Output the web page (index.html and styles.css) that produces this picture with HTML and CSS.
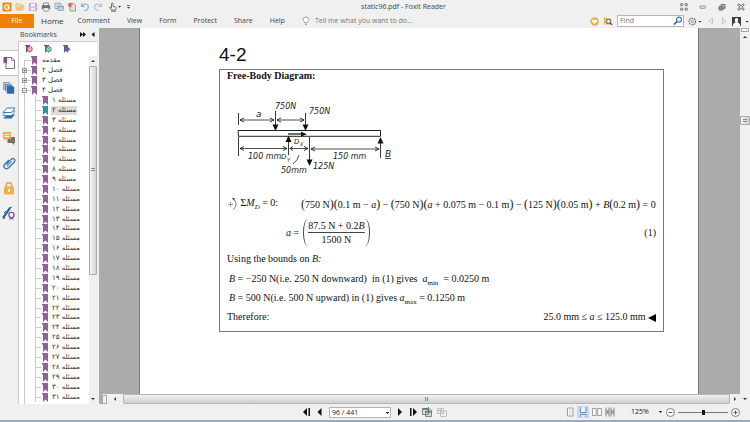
FILE: index.html
```html
<!DOCTYPE html>
<html lang="en">
<head>
<meta charset="utf-8">
<title>static96.pdf - Foxit Reader</title>
<link rel="stylesheet" href="styles.css">
</head>
<body>
<svg class="defs" aria-hidden="true">
  <symbol id="flag" viewBox="0 0 6 9"><path d="M0 0H6V9L3.4 6.6L1 9V1.6H0z"/></symbol>
</svg>

<header class="titlebar">
  <div class="quick">
    <button aria-label="Foxit"><svg width="10" height="10"><rect x=".5" y=".5" width="9" height="9" rx="1" fill="#f08a12"/><path d="M7.4 3.2C4 2 2.5 4 2.7 5.5S5 8 7 6.8V5H5.3" fill="none" stroke="#fff" stroke-width="1.3"/></svg></button>
    <button aria-label="Open"><svg width="10" height="10"><path d="M1 8.5V1.8h3l1 1h3v1.4" fill="#f7dda8" stroke="#dfab55" stroke-width=".7"/><path d="M1 8.5L3 4.3h6.6L8 8.5z" fill="#f3c374"/></svg></button>
    <button aria-label="Save"><svg width="10" height="10"><path d="M1.5 1.5h7v7h-7z" fill="#d9c5df" stroke="#b795c4" stroke-width=".9"/><path d="M3 1.5h4v2.8H3zM3 6h4v2.5H3z" fill="#f7f0f8"/></svg></button>
    <button aria-label="Print"><svg width="10" height="10"><path d="M2.7 1h4.6v3H2.7zM2.7 6h4.6v3H2.7z" fill="#fff" stroke="#555" stroke-width=".7"/><path d="M.8 3.3h8.4v3.9H.8z" fill="#68717b"/><path d="M2.5 6h5v2.6h-5z" fill="#dde9f3"/></svg></button>
    <button aria-label="Email"><svg width="10" height="10"><path d="M1 1.2h6v5.3H1z" fill="#eee" stroke="#888" stroke-width=".7"/><path d="M2 3h4M2 4.7h4" stroke="#999" stroke-width=".6"/><path d="M4 4.3h5.3v4H4z" fill="#dceaf6" stroke="#5b86ad" stroke-width=".7"/><path d="M4 4.5l2.7 2L9.3 4.5" fill="none" stroke="#5b86ad" stroke-width=".6"/></svg></button>
    <button aria-label="New"><svg width="10" height="10"><path d="M3 1.5h3.5l2 2V9H3z" fill="#e5e2dd" stroke="#8b8781" stroke-width=".8"/><path d="M3 .7v4.6M.7 3h4.6M1.4 1.4l3.2 3.2M4.600 1.4L1.400 4.600" stroke="#d94c38" stroke-width=".9"/></svg></button>
    <button aria-label="Undo"><svg width="10" height="10"><path d="M1.500 1.300V4.400H4.700M1.800 4.200C4 .5 8.500 1.500 8.300 5.200 8.200 7.500 6 8.700 4.300 8.500" fill="none" stroke="#8aaed2" stroke-width="1.100"/></svg></button>
    <button aria-label="Redo"><svg width="10" height="10"><path d="M8.500 1.300V4.400H5.300M8.200 4.200C6 .5 1.500 1.500 1.700 5.200 1.800 7.500 4 8.700 5.700 8.500" fill="none" stroke="#a9c2da" stroke-width="1.100"/></svg></button>
    <button aria-label="Hand tool" class="wide"><svg width="13" height="10"><path d="M3.500 6V2q0-1 .8-1t.7 1v2.500l2.700.6q.7.300.4 1.200L7.500 8H3.700L1.500 5.500q.7-.8 2 .5M3 9.200h5" fill="#fff" stroke="#566170" stroke-width=".9"/><path d="M10 4h3l-1.500 1.700z" fill="#333"/></svg></button>
    <button aria-label="Customize"><svg width="10" height="10"><path d="M2 3.500h3" stroke="#444" stroke-width=".8"/><path d="M2 5h3L3.500 6.700z" fill="#333"/></svg></button>
  </div>
  <h1>static96.pdf - Foxit Reader</h1>
  <div class="winbtns">
    <button aria-label="Layout"><svg width="8" height="8" fill="none" stroke="#777b86"><path d="M.7.7h2v2h-2zM5.200.7h2v2h-2zM.7 5.200h2v2h-2zM5.200 5.200h2v2h-2z"/></svg></button>
    <button aria-label="Minimize"><svg width="8" height="8"><rect x="1" y="3" width="5.500" height="2.200" rx=".8" fill="#fff" stroke="#777b86" stroke-width=".9"/></svg></button>
    <button aria-label="Restore"><svg width="8" height="8"><path d="M3 1.500h4v3.800H3z" fill="#bbb" stroke="#70747f"/><path d="M1 3.500h4v3.500H1z" fill="#888c96" stroke="#70747f"/></svg></button>
    <button aria-label="Close"><svg width="8" height="8"><path d="M1 1l6 6M7 1L1 7" stroke="#70747f" stroke-width="2.400"/><path d="M1.500 1.500l5 5M6.500 1.500l-5 5" stroke="#fff" stroke-width=".8"/></svg></button>
  </div>
</header>

<nav class="ribbon">
  <button class="file">File</button>
  <button class="tab on">Home</button>
  <button class="tab">Comment</button>
  <button class="tab">View</button>
  <button class="tab">Form</button>
  <button class="tab">Protect</button>
  <button class="tab">Share</button>
  <button class="tab">Help</button>
  <label class="tell"><svg width="8" height="10"><path d="M2.700 7V6Q1 4.800 1 3.500 1.200 1 4 1t3 2.500Q7 4.800 5.300 6v1zM3 8.700h2" fill="#fff" stroke="#8a8a8a" stroke-width=".8"/></svg><input aria-label="Tell me" placeholder="Tell me what you want to do..."></label>
  <div class="search">
    <button aria-label="Favorite"><svg width="9" height="9"><circle cx="4.500" cy="4.500" r="4.200" fill="#ecae4b"/><path d="M4.500 7L2 4.500Q1.700 2.500 3.300 2.500 4.200 2.600 4.500 3.400 4.800 2.600 5.700 2.500 7.300 2.500 7 4.500z" fill="#fff"/></svg></button>
    <button aria-label="Search folder"><svg width="10" height="10"><path d="M.8 1.500h3l.8 1h3.700v6H.8z" fill="#eeb65d"/><circle cx="5.500" cy="5.300" r="2" fill="#fff" stroke="#444" stroke-width=".9"/><path d="M7 6.800l2 2" stroke="#444" stroke-width="1.200"/></svg></button>
    <label class="find"><input type="text" aria-label="Find" placeholder="Find"><svg width="10" height="10"><circle cx="6" cy="3.600" r="2.500" fill="#f4f9ff" stroke="#3a78b8" stroke-width="1.200"/><path d="M4 5.500L1 8.500" stroke="#2f6198" stroke-width="1.700"/></svg></label>
    <button aria-label="Settings"><svg width="14" height="9"><circle cx="4.300" cy="4.500" r="3.300" fill="#eee" stroke="#666b75" stroke-width="1.100" stroke-dasharray="1.700 .7"/><circle cx="4.300" cy="4.500" r="1.200" fill="none" stroke="#777" stroke-width=".7"/><path d="M10.500 4h3L12 5.600z" fill="#222"/></svg></button>
    <button aria-label="Previous" class="step"><svg width="6" height="8"><path d="M4.500 1v6L1 4z" fill="none" stroke="#bbb" stroke-width=".8"/></svg></button>
    <button aria-label="Next" class="step"><svg width="6" height="8"><path d="M1.500 1v6L5 4z" fill="none" stroke="#bbb" stroke-width=".8"/></svg></button>
    <button aria-label="Account"><svg width="17" height="9"><path d="M0 0h9v9H0z" fill="#3c3c40"/><path d="M4.500 1C6.600 1 6.500 4 5.500 5.300L8 7v2H1V7l2.500-1.700C2.500 4 2.400 1 4.500 1" fill="#fff"/><path d="M13.500 4h3L15 5.600z" fill="#222"/></svg></button>
  </div>
</nav>

<main class="work">
  <aside class="rail">
    <button class="on" aria-label="Bookmarks"><svg width="14" height="14"><path d="M4 1.500h6l2.500 2.500v8.500H4z" fill="#fff" stroke="#777" stroke-width="1"/><path d="M9.500 1.500v3h3" fill="none" stroke="#777" stroke-width=".8"/><path d="M1.500 1H5v7L3.200 6.300 1.500 8z" fill="#7d4b96"/></svg></button>
    <button aria-label="Pages"><svg width="14" height="14"><path d="M1 1h7v8H1z" fill="#83a5c9"/><path d="M2.500 2.500h7.500v8H2.500z" fill="#4e83bb" stroke="#fff" stroke-width=".5"/><path d="M4.500 4H10l2.500 2.500V13h-8z" fill="#2b6cad" stroke="#fff" stroke-width=".5"/></svg></button>
    <button aria-label="Layers"><svg width="14" height="14"><path d="M5 8.500h8L9.500 12.500H1z" fill="#2d6dad"/><path d="M5 5h8L9.500 9.500H1z" fill="#fff" stroke="#3c79b5" stroke-width=".8"/><path d="M5 2h8L9.500 6.500H1z" fill="#fff" stroke="#3c79b5"/></svg></button>
    <button aria-label="Comments"><svg width="14" height="14"><path d="M5.500 6H13v6h-1v2l-2-2H5.500z" fill="#77736c"/><path d="M1 1h8v7H5L3 10V8H1z" fill="#edb04d"/><path d="M2.500 3.500h5M2.500 5.500h5" stroke="#fff" stroke-width=".8"/></svg></button>
    <button aria-label="Attachments"><svg width="14" height="14"><path d="M4.500 8.500L9 3.500Q10.500 1.700 12 3t.3 3L6.500 12Q4.300 13.500 2.700 12T2.500 8.500L7 4" fill="none" stroke="#3f7db9" stroke-width="1.400"/><path d="M5 10.500l4.500-5" stroke="#3f7db9" stroke-width="1.100"/></svg></button>
    <button aria-label="Security"><svg width="14" height="14"><path d="M4.300 6V4Q4.300 1.700 7 1.700T9.700 4v2" fill="none" stroke="#e2a440" stroke-width="1.400"/><rect x="2" y="5.500" width="10" height="8" rx=".8" fill="#edb04d"/><path d="M7 8v3" stroke="#fff" stroke-width="1.500"/></svg></button>
    <button aria-label="Signatures"><svg width="14" height="14"><path d="M1 12L8 2" stroke="#31669d" stroke-width="2.200"/><path d="M7 2l3-1M2 7l2-2M1 12.500l2-.3" stroke="#31669d"/><circle cx="9.500" cy="9" r="2.600" fill="#fff" stroke="#7d55a0" stroke-width="1.300"/><path d="M8 11l-.7 3 2.200-1.200 2 1.200-.7-3" fill="#7d55a0"/></svg></button>
  </aside>

  <section class="bookmarks">
    <div class="panel-head"><h2>Bookmarks</h2>
      <button aria-label="More"><svg width="6" height="5"><path d="M0 0l3 2.500L0 5zM3 0l3 2.500L3 5z" fill="#111"/></svg></button>
      <button aria-label="Collapse"><svg width="6" height="5"><path d="M4.500 0v5L1.500 2.500z" fill="#111"/></svg></button>
    </div>
    <div class="panel-tools">
      <button aria-label="Delete bookmark"><svg width="9" height="10"><path d="M1 1h5v8L3.800 6.800 2 9V2H1z" fill="#7d4b96"/><circle cx="5.800" cy="5" r="2.300" fill="#fff" stroke="#d6544d" stroke-width="1.100"/><path d="M4.500 5h2.500" stroke="#d6544d"/></svg></button>
      <button aria-label="Add bookmark"><svg width="9" height="10"><path d="M1 1h5v8L3.800 6.800 2 9V2H1z" fill="#7d4b96"/><circle cx="5.800" cy="5" r="2.300" fill="#fff" stroke="#36a079" stroke-width="1.100"/><path d="M4.500 5h2.500M5.800 3.800v2.500" stroke="#36a079" stroke-width=".8"/></svg></button>
      <button aria-label="Go to bookmark"><svg width="9" height="10"><path d="M1 1h5v8L3.800 6.800 2 9V2H1z" fill="#7d4b96"/><path d="M3.500 4.400H6V3l2.500 2.200L6 7.500V6H3.500z" fill="#4779ae"/></svg></button>
    </div>
    <div class="tree-wrap">
      <ul class="tree">
        <li class="top first"><i></i><svg><use href="#flag"/></svg><a href="#p">مقدمه</a></li>
        <li class="top"><i><button aria-label="Expand">+</button></i><svg><use href="#flag"/></svg><a href="#p">فصل ۲</a></li>
        <li class="top"><i><button aria-label="Expand">+</button></i><svg><use href="#flag"/></svg><a href="#p">فصل ۳</a></li>
        <li class="top"><i><button aria-label="Collapse">−</button></i><svg><use href="#flag"/></svg><a href="#p">فصل ۴</a></li>
        <li><i></i><svg><use href="#flag"/></svg><a href="#p">مسئله ۱</a></li>
        <li class="current"><i></i><svg><use href="#flag"/></svg><a href="#p">مسئله ۲</a></li>
        <li><i></i><svg><use href="#flag"/></svg><a href="#p">مسئله ۳</a></li>
        <li><i></i><svg><use href="#flag"/></svg><a href="#p">مسئله ۴</a></li>
        <li><i></i><svg><use href="#flag"/></svg><a href="#p">مسئله ۵</a></li>
        <li><i></i><svg><use href="#flag"/></svg><a href="#p">مسئله ۶</a></li>
        <li><i></i><svg><use href="#flag"/></svg><a href="#p">مسئله ۷</a></li>
        <li><i></i><svg><use href="#flag"/></svg><a href="#p">مسئله ۸</a></li>
        <li><i></i><svg><use href="#flag"/></svg><a href="#p">مسئله ۹</a></li>
        <li><i></i><svg><use href="#flag"/></svg><a href="#p">مسئله ۱۰</a></li>
        <li><i></i><svg><use href="#flag"/></svg><a href="#p">مسئله ۱۱</a></li>
        <li><i></i><svg><use href="#flag"/></svg><a href="#p">مسئله ۱۲</a></li>
        <li><i></i><svg><use href="#flag"/></svg><a href="#p">مسئله ۱۳</a></li>
        <li><i></i><svg><use href="#flag"/></svg><a href="#p">مسئله ۱۴</a></li>
        <li><i></i><svg><use href="#flag"/></svg><a href="#p">مسئله ۱۵</a></li>
        <li><i></i><svg><use href="#flag"/></svg><a href="#p">مسئله ۱۶</a></li>
        <li><i></i><svg><use href="#flag"/></svg><a href="#p">مسئله ۱۷</a></li>
        <li><i></i><svg><use href="#flag"/></svg><a href="#p">مسئله ۱۸</a></li>
        <li><i></i><svg><use href="#flag"/></svg><a href="#p">مسئله ۱۹</a></li>
        <li><i></i><svg><use href="#flag"/></svg><a href="#p">مسئله ۲۰</a></li>
        <li><i></i><svg><use href="#flag"/></svg><a href="#p">مسئله ۲۱</a></li>
        <li><i></i><svg><use href="#flag"/></svg><a href="#p">مسئله ۲۲</a></li>
        <li><i></i><svg><use href="#flag"/></svg><a href="#p">مسئله ۲۳</a></li>
        <li><i></i><svg><use href="#flag"/></svg><a href="#p">مسئله ۲۴</a></li>
        <li><i></i><svg><use href="#flag"/></svg><a href="#p">مسئله ۲۵</a></li>
        <li><i></i><svg><use href="#flag"/></svg><a href="#p">مسئله ۲۶</a></li>
        <li><i></i><svg><use href="#flag"/></svg><a href="#p">مسئله ۲۷</a></li>
        <li><i></i><svg><use href="#flag"/></svg><a href="#p">مسئله ۲۸</a></li>
        <li><i></i><svg><use href="#flag"/></svg><a href="#p">مسئله ۲۹</a></li>
        <li><i></i><svg><use href="#flag"/></svg><a href="#p">مسئله ۳۰</a></li>
        <li><i></i><svg><use href="#flag"/></svg><a href="#p">مسئله ۳۱</a></li>
      </ul>
      <div class="vbar tree-bar"><span class="up"></span><span class="thumb"></span><span class="track"></span><span class="down"></span></div>
    </div>
  </section>

  <div class="splitter"></div>

  <section class="viewer">
    <div class="canvas">
      <article class="page" id="p">
        <h2>4-2</h2>
        <div class="solution">
          <h3>Free-Body Diagram:</h3>
          <svg class="diagram" viewBox="228 82 190 110" width="190" height="110" role="img" aria-label="Free-body diagram of a beam">
            <g fill="none" stroke="#222" stroke-width="1">
              <path d="M238 130.500H380.500V136.300H238.500z"/>
              <path d="M238.500 113V125M238.500 137V156M275.500 111V126M305.500 113V126M288.500 142V155M309.500 137V161M380.500 141V158" stroke-width=".9"/>
              <path d="M240 120H274M277 120H304M240 148.500H287M289.500 148.500H308M311 149H379" stroke-width=".8"/>
              <path d="M244 118l-4 2 4 2M270 118l4 2-4 2M281 118l-4 2 4 2M300 118l4 2-4 2M244 146.500l-4 2 4 2M283 146.500l4 2-4 2M293 146.500l-3 2 3 2M304 146.500l4 2-4 2M315 147l-4 2 4 2M375 147l4 2-4 2" stroke-width=".9"/>
              <path d="M288 134H303" stroke-width="1.300"/>
              <path d="M299 155Q298 160 293 164M385 158.500H391" stroke-width=".8"/>
            </g>
            <path d="M272.500 124.500h6l-3 6.500zM302.500 124.500h6l-3 6.500zM285.500 142l3-6.500 3 6.500zM306.500 159.500h6l-3 6.500zM377.500 143.500l3-6.500 3 6.500zM301 131.800l6 2.400-6 2.200z" fill="#111"/>
            <g class="hand">
              <text x="256" y="117" class="big">a</text>
              <text x="275" y="109">750N</text>
              <text x="309" y="114">750N</text>
              <text x="248" y="159">100 mm</text>
              <text x="281" y="159" class="small">D</text><text x="287" y="162" class="tiny">Y</text>
              <text x="294" y="144" class="small">D</text><text x="300" y="146" class="tiny">X</text>
              <text x="281" y="173">50mm</text>
              <text x="313" y="169">125N</text>
              <text x="333" y="159">150 mm</text>
              <text x="385" y="157" class="big">B</text>
            </g>
          </svg>
          <div class="moment">
            <span class="lead"><svg width="11" height="14"><path d="M1 7.500h5M3.500 5v5" stroke="#777" stroke-width=".7"/><path d="M6 1.500Q12 7 6.500 12.500" fill="none" stroke="#555" stroke-width=".8"/><path d="M5 1l3 .3-1.500 2z" fill="#333"/></svg> Σ<em>M<sub>D</sub></em> = 0:</span>
            <span class="expr"><b>(</b>750 N<b>)(</b>0.1 m − <em>a</em><b>)</b> − <b>(</b>750 N<b>)(</b><em>a</em> + 0.075 m − 0.1 m<b>)</b> − <b>(</b>125 N<b>)(</b>0.05 m<b>)</b> + <em>B</em><b>(</b>0.2 m<b>)</b> = 0</span>
          </div>
          <div class="ratio">
            <span><em>a</em> =</span>
            <span class="frac"><span class="num">87.5 N + 0.2<em>B</em></span><span>1500 N</span></span>
            <span class="eqno">(1)</span>
          </div>
          <p>Using the bounds on <em>B:</em></p>
          <p class="case"><em>B</em> = −250 N(i.e. 250 N downward)&nbsp; in (1) gives &nbsp;<em>a</em><sub>min</sub>&nbsp; = 0.0250 m</p>
          <p class="case"><em>B</em> = 500 N(i.e. 500 N upward) in (1) gives <em>a</em><sub>max</sub> = 0.1250 m</p>
          <p class="result"><span>Therefore:</span><span>25.0 mm ≤ <em>a</em> ≤ 125.0 mm <svg width="8" height="8"><path d="M8 0v8L0 4z"/></svg></span></p>
        </div>
      </article>
    </div>
    <div class="vbar doc-bar"><span class="split"></span><span class="up"></span><span class="track"></span><span class="thumb"></span><span class="rest"></span><span class="down"></span></div>
    <div class="hbar"><span class="split"></span><span class="left"></span><span class="thumb"></span><span class="right"></span></div>
  </section>
</main>

<footer class="status">
  <div class="pager">
    <button aria-label="First page"><svg width="8" height="8"><path d="M4 0v8L0 4zM5.500 0H7v8H5.500z"/></svg></button>
    <button aria-label="Previous page"><svg width="8" height="8"><path d="M5.500 0v8L1.500 4z"/></svg></button>
    <select aria-label="Page"><option>96 / 441</option></select>
    <button aria-label="Next page"><svg width="8" height="8"><path d="M2 0v8l4-4z"/></svg></button>
    <button aria-label="Last page"><svg width="8" height="8"><path d="M1 0h1.500v8H1zM4 0v8l4-4z"/></svg></button>
    <button aria-label="Previous view"><svg width="10" height="10"><path d="M.5 1.500h6v6h-6zM3.500 4h6v5.500h-6z" fill="#ddd" stroke="#777" stroke-width=".9"/><path d="M.5 2h6M3.500 5h6" stroke="#555"/><path d="M9.500 3.500Q8 1 5 2.500L6.500 0M5 2.500l2 1.500" fill="none" stroke="#299b77"/></svg></button>
    <button aria-label="Next view"><svg width="10" height="10"><path d="M.5 1.500h6v5h-6zM3.500 4h6v5.500h-6z" fill="#eee" stroke="#bbb" stroke-width=".9"/><path d="M1 3.500h4l-1.500-2M5 3.500l-1.500 2" fill="none" stroke="#92c7b5"/></svg></button>
  </div>
  <div class="view">
    <button aria-label="Single page"><svg width="8" height="10"><path d="M1.500 1h5.500v8H1.500z" fill="#fff" stroke="#888" stroke-width=".8"/><path d="M3 3h2.500M3 5h2.500M3 7h2.500" stroke="#aaa" stroke-width=".6"/></svg></button>
    <button aria-label="Continuous" class="on"><svg width="8" height="10"><path d="M1.500 0v5.500h5.500V0M1.500 10V7.500h5.500V10" fill="#e5efff" stroke="#6e85a5" stroke-width=".9"/></svg></button>
    <button aria-label="Facing"><svg width="10" height="10"><path d="M.5 1.500h3.700v7H.5zM5.700 1.500h3.700v7H5.700z" fill="#fff" stroke="#888" stroke-width=".8"/></svg></button>
    <button aria-label="Continuous facing"><svg width="10" height="10"><path d="M1 .5v3.500h3V.5M6 .5v3.500h3V.5M1 9.500V6h3v3.500M6 9.500V6h3v3.500M0 5h10" fill="none" stroke="#777" stroke-width=".9"/></svg></button>
    <output>125%</output>
    <button aria-label="Zoom levels" class="drop"><svg width="4" height="4"><path d="M0 1h3L1.500 3z"/></svg></button>
    <button aria-label="Zoom out"><svg width="9" height="9"><circle cx="4.500" cy="4.500" r="4" fill="#fff" stroke="#666" stroke-width=".8"/><path d="M2.500 4.500h4" stroke="#555"/></svg></button>
    <input type="range" aria-label="Zoom" value="52">
    <button aria-label="Zoom in"><svg width="9" height="9"><circle cx="4.500" cy="4.500" r="4" fill="#fff" stroke="#666" stroke-width=".8"/><path d="M2.500 4.500h4M4.500 2.500v4" stroke="#555"/></svg></button>
  </div>
</footer>
</body>
</html>
```
FILE: styles.css
```css
* { box-sizing: border-box; margin: 0; padding: 0; }
html, body { height: 100%; }
body {
  display: grid;
  grid-template-rows: 14px 14px minmax(0, 1fr) 18px;
  overflow: hidden;
  background: #f0f0f0;
  color: #444;
  font: 7px/10px "Open Sans", "Noto Sans", sans-serif;
}
button, input, select { border: 0; background: none; font: inherit; color: inherit; appearance: none; }
button { display: flex; align-items: center; justify-content: center; flex: none; }
svg { display: block; flex: none; }
.defs { width: 0; height: 0; position: absolute; }

/* Title bar */
.titlebar { display: grid; grid-template-columns: 1fr auto 1fr; align-items: center; padding: 0 5px 0 2px; }
.titlebar h1 { font-size: 7px; font-weight: 400; padding-left: 60px; }
.quick { display: flex; gap: 3px; }
.quick button { width: 10px; height: 12px; }
.quick .wide { width: 16px; }
.winbtns { display: flex; justify-content: flex-end; gap: 11px; }

/* Ribbon */
.ribbon { display: flex; align-items: stretch; font-size: 7px; }
.file { width: 34px; background: #f08200; color: #fff; }
.tab { padding: 0 8px; margin-right: 1px; }
.tab.on { font-size: 8px; color: #333; padding: 0 5px 0 7px; }
.tell { display: flex; align-items: center; gap: 5px; margin-left: 8px; }
.tell input { width: 120px; color: #777; }
input::placeholder { color: #777; opacity: 1; }
.search { display: flex; align-items: center; gap: 4px; margin-left: auto; padding-right: 1px; }
.step { width: 9px; }
.find { display: flex; align-items: center; width: 67px; height: 12px; background: #fff; border: 1px solid #b8b8b8; }
.find input { flex: 1; min-width: 0; padding-left: 2px; }

/* Work area */
.work { display: flex; min-height: 0; }
.rail { width: 18px; display: flex; flex-direction: column; align-items: center; padding-top: 28px; gap: 11px; }
.rail button { width: 18px; height: 14px; }
.rail .on { height: 26px; margin: -6px 0; background: #fff; border: 1px solid #c4c4c4; border-width: 1px 0; }
.bookmarks { width: 79px; display: flex; flex-direction: column; min-height: 0; }
.panel-head { height: 13px; display: flex; align-items: center; gap: 4px; padding: 0 1px 0 2px; }
.panel-head h2 { font-size: 7px; font-weight: 400; flex: 1; }
.panel-tools { height: 15px; display: flex; align-items: center; gap: 10px; padding-left: 5px; background: #fff; border-top: 1px solid #ccc; border-left: 1px solid #ccc; }
.tree-wrap { flex: 1; min-height: 0; display: flex; background: #fff; border-left: 1px solid #ccc; }
.tree { flex: 1; list-style: none; display: grid; grid-auto-rows: minmax(0, 1fr); padding-bottom: 2px; color: #333; font: 7px/9px "DejaVu Sans", sans-serif; background: linear-gradient(#ccc, #ccc) 5px 5px / 1px 100% no-repeat; }
.tree li { display: flex; align-items: center; min-height: 0; }
.tree li i { align-self: stretch; width: 23px; flex: none; display: flex; align-items: center; padding-left: 3px; background: linear-gradient(#ccc, #ccc) 16px 0 / 1px 100% no-repeat, linear-gradient(#ccc, #ccc) 16px 50% / 6px 1px no-repeat; }
.tree .top i { width: 12px; background: linear-gradient(#ccc, #ccc) 5px 50% / 7px 1px no-repeat; }
.tree i button { width: 5px; height: 5px; background: #fff; border: 1px solid #999; font: 5px/3px "Liberation Sans", sans-serif; color: #000; }
.tree svg { width: 6px; height: 9px; fill: #935f9d; }
.tree a { direction: rtl; margin-left: 3px; padding: 0 1px; color: inherit; text-decoration: none; white-space: nowrap; }
.tree .top a { margin-left: 4px; }
.tree .current svg { fill: #289a94; }
.tree .current a { background: #dcdcdc; }

.splitter { width: 5px; background: repeating-linear-gradient(#888 0 1px, transparent 1px 2px) 3px 155px / 2px 24px no-repeat #ababab; border-left: 2px solid #f0f0f0; }

/* Scroll bars */
.vbar { display: flex; flex-direction: column; align-items: center; background: #f0f0f0; }
.vbar .thumb { border: 1px solid #aaa; border-radius: 1px; background: linear-gradient(90deg, #f6f6f6, #d2d2d4); align-self: stretch; }
.up, .down { height: 10px; display: grid; place-items: center; flex: none; }
.up::before, .down::before, .left::before, .right::before { content: ""; border: 2px solid transparent; }
.up::before { border-bottom-color: #333; border-top: 0; }
.down::before { border-top-color: #333; border-bottom: 0; }
.tree-bar { width: 8px; }
.tree-bar .thumb { flex: 208; display: grid; place-items: center; }
.tree-bar .track { flex: 120; }
.thumb::before { content: ""; width: 4px; height: 4px; background: repeating-linear-gradient(#888 0 1px, transparent 1px 2px); }
.doc-bar { grid-area: 1 / 2 / 3 / 3; }
.doc-bar .split { height: 4px; width: 8px; border: 1px solid #aaa; }
.doc-bar .track { flex: 74; }
.doc-bar .thumb { height: 9px; display: grid; place-items: center; }
.doc-bar .rest { flex: 268; }

/* Document */
.viewer { flex: 1; min-width: 0; display: grid; grid-template: minmax(0, 1fr) 10px / minmax(0, 1fr) 10px; }
.canvas { grid-area: 1 / 1; background: #ababab; overflow: hidden; padding: 0 41px 0 37px; }
.page { height: 100%; background: #fff; color: #111; padding: 16px 34px 0 79px; border-left: 1px solid #777; border-right: 1px solid #777; font: 10px/12px "Liberation Serif", serif; }
.page h2 { font: 19px/22px "Liberation Sans", sans-serif; margin-bottom: 3px; }
.solution { border: 1px solid #777; padding: 0 7px 4px 7px; }
.solution h3 { font-size: 10px; line-height: 12px; }
.diagram { margin-left: 1px; }
.hand { font: italic 8px "DejaVu Sans", sans-serif; fill: #222; }
.hand .big { font-size: 9px; }
.hand .small { font-size: 7px; }
.hand .tiny { font-size: 5px; }
.page sub { font-size: 7px; line-height: 0; }
.moment { display: flex; align-items: center; height: 24px; white-space: nowrap; }
.lead { display: flex; align-items: baseline; width: 74px; white-space: pre; }
.lead svg { align-self: center; }
.moment b { font-weight: 400; font-size: 12px; }
.ratio { display: flex; align-items: center; height: 33px; padding-left: 59px; gap: 4px; }
.frac { padding: 0 4px; text-align: center; border: 1px solid #444; border-width: 0 1px; border-radius: 5px / 13px; }
.frac span { display: block; line-height: 13px; }
.frac .num { border-bottom: 1px solid #444; }
.eqno { margin-left: auto; }
.solution p { line-height: 20px; height: 20px; white-space: nowrap; }
.solution .case { line-height: 19px; height: 19px; padding-left: 2px; }
.result { display: flex; justify-content: space-between; }
.result svg { display: inline-block; vertical-align: middle; }

.hbar { grid-area: 2 / 1; display: flex; align-items: center; background: #f0f0f0; }
.hbar .split { width: 5px; height: 9px; border: 1px solid #aaa; }
.hbar .thumb { flex: 1; height: 10px; display: grid; place-items: center; border: 1px solid #b4b4b4; border-radius: 1px; background: linear-gradient(#f2f2f2, #cfcfd1); }
.hbar .thumb::before { background: repeating-linear-gradient(90deg, #888 0 1px, transparent 1px 2px); }
.left { width: 16px; display: grid; place-items: center; }
.right { width: 10px; display: grid; place-items: center; }
.left::before { border-right-color: #333; border-left: 0; }
.right::before { border-left-color: #333; border-right: 0; }

/* Status bar */
.status { display: flex; align-items: center; border-bottom: 2px solid #9daaba; padding: 0 10px 0 303px; }
.pager, .view { display: flex; align-items: center; gap: 5px; color: #222; }
.pager svg { fill: #111; }
.pager select { width: 62px; height: 11px; padding-left: 2px; background: linear-gradient(#333, #333) 56px 4px / 3px 1px no-repeat, linear-gradient(#333, #333) 57px 5px / 1px 1px no-repeat #fff; border: 1px solid #b5b5b5; }
.view { margin-left: auto; gap: 3px; }
.view .on { background: #c3d8f5; width: 12px; height: 12px; }
.view output { margin-left: 13px; width: 25px; }
.view input { width: 50px; height: 8px; background: linear-gradient(#777, #777) 0 50% / 100% 1px no-repeat; }
.view input::-webkit-slider-thumb { appearance: none; width: 3px; height: 5px; background: #111; }
```
